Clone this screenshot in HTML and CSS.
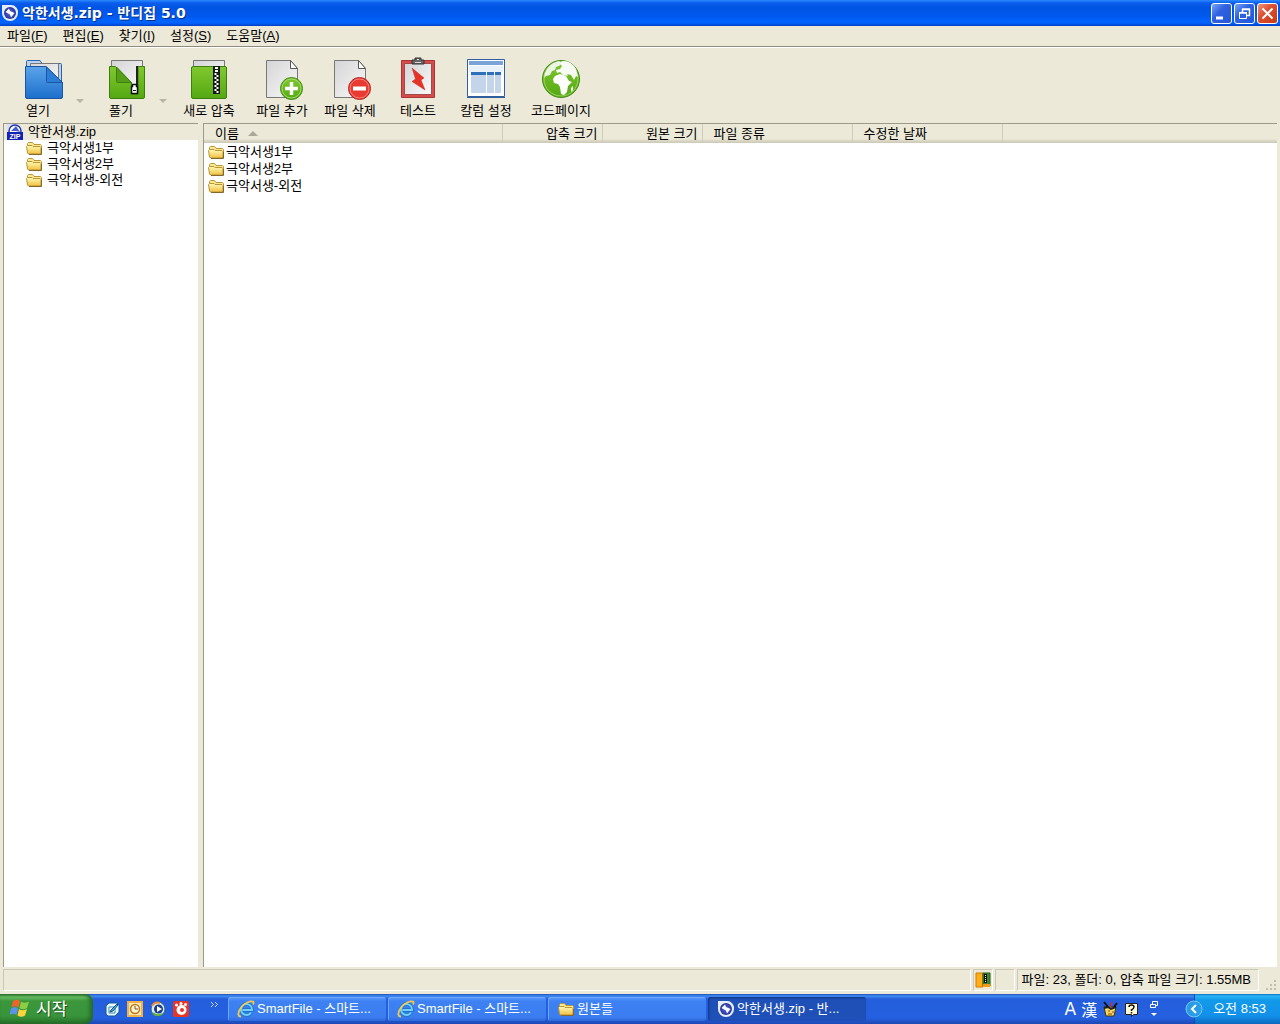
FILE: index.html
```html
<!DOCTYPE html>
<html lang="ko">
<head>
  <meta charset="UTF-8">
  <meta name="viewport" content="width=device-width, initial-scale=1.0">
  <title>악한서생.zip - 반디집 5.0</title>
  <link rel="stylesheet" href="styles.css">
</head>
<body>
  <!-- shared gradients and small icons -->
  <svg class="defs" width="0" height="0" aria-hidden="true">
    <defs>
      <linearGradient id="blue" x1="0" y1="0" x2="0" y2="1"><stop offset="0" stop-color="#5ba4ea"/><stop offset="1" stop-color="#1c6fcb"/></linearGradient>
      <linearGradient id="green" x1="0" y1="0" x2="0" y2="1"><stop offset="0" stop-color="#82c830"/><stop offset="1" stop-color="#54a812"/></linearGradient>
      <linearGradient id="paper" x1="0" y1="0" x2="1" y2="1"><stop offset="0" stop-color="#d4d4d6"/><stop offset="1" stop-color="#fafafa"/></linearGradient>
      <linearGradient id="folder" x1="0" y1="0" x2="0" y2="1"><stop offset="0" stop-color="#fffbb8"/><stop offset="1" stop-color="#f0c040"/></linearGradient>
      <radialGradient id="ball"><stop offset="0" stop-color="#5b6be8"/><stop offset="1" stop-color="#27349c"/></radialGradient>
      <symbol id="i-folder" viewBox="0 0 16 16">
        <path d="M1.500 12V3.500l1-1h4l1.500 2h6.500l1 1v8" fill="#ffe98a" stroke="#b8953a"/>
        <path d="M.5 6.500l1 6.500 1 1h11.500l1-1V7.500l-1-1H7l-1-1H1.500z" fill="url(#folder)" stroke="#b8953a"/>
        <path d="M3 14.500h12.500V8" fill="none" stroke="#86682a"/>
      </symbol>
      <symbol id="i-bandi" viewBox="0 0 16 16">
        <path d="M0 0h9a7 7 0 0 1 7 8 8 8 0 0 1-16 0z" fill="#e9edf9"/>
        <circle cx="8" cy="8" r="6" fill="url(#ball)"/>
        <path d="M3.500 7L7 3.500 8 6l4.500 2L9 12.500 8 9.500z" fill="#fff"/>
      </symbol>
      <symbol id="i-ie" viewBox="0 0 18 18">
        <path d="M14 12.500Q12.500 15 9.500 15A5.500 5.500 0 1 1 15 10H5.500" fill="none" stroke="#1c6fc4" stroke-width="3.500"/>
        <path d="M14 12.500Q12.500 15 9.500 15A5.500 5.500 0 1 1 15 10H5.500" fill="none" stroke="#6fd0fa" stroke-width="2"/>
        <path d="M4 16.500C-2 17 3 4 13 1.500q5-1 3 3" fill="none" stroke="#f2c850" stroke-width="1.800"/>
      </symbol>
    </defs>
  </svg>

  <header class="titlebar">
    <svg class="icon16" aria-hidden="true"><use href="#i-bandi"/></svg>
    <h1>악한서생.zip - 반디집 5.0</h1>
    <div class="window-buttons">
      <button class="win-btn" aria-label="최소화"><svg viewBox="0 0 19 19"><path d="M4 14h7" stroke="#fff" stroke-width="3"/></svg></button>
      <button class="win-btn" aria-label="이전 크기로"><svg viewBox="0 0 19 19"><path d="M7.500 8V5.500h7v6H12M7 5h8M4 9h8" fill="none" stroke="#fff" stroke-width="1.500"/><path d="M4.500 8.500h7v6h-7z" fill="none" stroke="#fff"/></svg></button>
      <button class="win-btn close" aria-label="닫기"><svg viewBox="0 0 19 19"><path d="M4.500 4.500l10 10M14.500 4.500l-10 10" stroke="#fff" stroke-width="2"/></svg></button>
    </div>
  </header>

  <nav class="menubar">
    <button>파일(<u>F</u>)</button>
    <button>편집(<u>E</u>)</button>
    <button>찾기(<u>I</u>)</button>
    <button>설정(<u>S</u>)</button>
    <button>도움말(<u>A</u>)</button>
  </nav>

  <div class="toolbar">
    <button class="tool">
      <svg viewBox="8 57 60 46">
        <path d="M26.500 97V61.500q0-1 1-1H40l2 3h18.500q1 0 1 1V97" fill="#b9d4f2" stroke="#2b62a8"/>
        <path d="M30.500 70v-6.500h28V82" fill="url(#paper)" stroke="#777"/>
        <path d="M25.500 66.500h20.500L62.500 82.500V97q0 1.500-1.500 1.500H27q-1.500 0-1.500-1.500z" fill="url(#blue)" stroke="#1c559f"/>
        <path d="M46.500 67v14.500q0 1 1 1h15z" fill="#2b7dd6" stroke="#1c559f"/>
      </svg>
      열기
    </button>
    <button class="tool-arrow" aria-label="열기 메뉴"></button>
    <button class="tool">
      <svg viewBox="91 57 60 46">
        <path d="M111.500 60.500h31V90h-31z" fill="url(#paper)" stroke="#777"/>
        <path d="M109.500 66.500h6l16 16V94h6.500V66.500h6.500V97q0 1.500-1.500 1.500h-32q-1.500 0-1.500-1.500z" fill="url(#green)" stroke="#3c7f10"/>
        <path d="M116.500 67v14.500q0 1 1 1h14z" fill="#559f18" stroke="#3c7f10"/>
        <path d="M137 66v20" stroke="#222" stroke-width="2"/>
        <path d="M132.500 84.500h4v2h1v7h-6v-7h1z" fill="#fff" stroke="#111" stroke-width="1.500"/>
        <path d="M133 90.500h3" stroke="#111"/>
      </svg>
      풀기
    </button>
    <button class="tool-arrow" aria-label="풀기 메뉴"></button>
    <button class="tool wide">
      <svg viewBox="179 57 60 46">
        <path d="M193.500 60.500h31V80h-31z" fill="url(#paper)" stroke="#777"/>
        <rect x="191.500" y="66.500" width="35" height="32" rx="1.500" fill="url(#green)" stroke="#3c7f10"/>
        <path d="M213 66h7v28h-7z" fill="#181818"/>
        <path d="M215 67h3v5h-3z" fill="#fff"/><path d="M215 69.500h3" stroke="#222"/>
        <path d="M215.500 73v20" stroke="#fff" stroke-width="2" stroke-dasharray="2 2"/>
        <path d="M217.500 75v18" stroke="#fff" stroke-width="2" stroke-dasharray="2 2"/>
      </svg>
      새로 압축
    </button>
    <button class="tool">
      <svg viewBox="252 57 60 46">
        <path d="M266.500 60.500h24l7 8v29h-31z" fill="url(#paper)" stroke="#777"/>
        <path d="M290.500 60.500v8h7z" fill="#fff" stroke="#555"/>
        <circle cx="291.500" cy="88.500" r="11" fill="url(#green)" stroke="#418b14"/>
        <circle cx="291.500" cy="88.500" r="9.500" fill="none" stroke="#a4db71"/>
        <path d="M285 88.500h13M291.500 82v13" stroke="#fff" stroke-width="3.500"/>
      </svg>
      파일 추가
    </button>
    <button class="tool">
      <svg viewBox="320 57 60 46">
        <path d="M334.500 60.500h24l7 8v29h-31z" fill="url(#paper)" stroke="#777"/>
        <path d="M358.500 60.500v8h7z" fill="#fff" stroke="#555"/>
        <circle cx="359.500" cy="88.500" r="11" fill="#e83a31" stroke="#b62822"/>
        <circle cx="359.500" cy="88.500" r="9.500" fill="none" stroke="#fa8279"/>
        <path d="M353 88.500h13" stroke="#fff" stroke-width="4"/>
      </svg>
      파일 삭제
    </button>
    <button class="tool">
      <svg viewBox="388 57 60 46">
        <path d="M401.500 60.500h33v37h-33z" fill="#d94a4a" stroke="#a93535"/>
        <path d="M404.500 63.500h27v31h-27z" fill="url(#paper)" stroke="#a04a4a"/>
        <path d="M412 68l12 10-3 2 4 10-13-8.500 3.500-2.500z" fill="#e83225" stroke="#bc3028" stroke-width=".5"/>
        <path d="M412 60h3v-2h6v2h3v4h-12z" fill="#666" stroke="#333"/>
        <path d="M415 62.500h6M417 59.500h2" stroke="#ddd"/>
      </svg>
      테스트
    </button>
    <button class="tool">
      <svg viewBox="456 57 60 46">
        <path d="M467.500 59.500h37v37h-37z" fill="#fff" stroke="#315f9e"/>
        <path d="M469 61h34v4h-34z" fill="#7ba3d8"/>
        <path d="M469 66h34v6h-34z" fill="#e9f1fb"/>
        <path d="M471 72h15v3h-15zM487 72h7v3h-7zM495 72h6v3h-6z" fill="#2b70b8"/>
        <path d="M471 75h15v18h-15zM487 75h7v18h-7zM495 75h6v18h-6z" fill="#c5d5e9"/>
        <path d="M467 97.500h38" stroke="#315f9e"/>
      </svg>
      칼럼 설정
    </button>
    <button class="tool codepage">
      <svg viewBox="531 57 60 46">
        <circle cx="561" cy="79" r="18.500" fill="url(#green)" stroke="#3f8a15"/>
        <circle cx="561" cy="79" r="17" fill="none" stroke="#9bd462"/>
        <path d="M547 69q5-7 12-8l3 2-3 3-3 1-1 3-3 1-2 4-4 1-2 2q0-5 3-9z" fill="#eef5e4"/>
        <path d="M562 61q9-1 14 8l2 8-2-1-2 4-3-5-4-1 1 2-5-1-3-3-3 1-1-3 4-1 2-3-2-2z" fill="#f8fbf3"/>
        <path d="M555 76l5-2 6 2 3 5 3 1-4 4-1 6-3 3-3-1-1-7-2-3-4-1-1-4z" fill="#fff"/>
        <path d="M571 88l2-2v4l-2 2z" fill="#fff"/>
      </svg>
      코드페이지
    </button>
  </div>

  <main class="panes">
    <ul class="tree">
      <li class="root">
        <svg class="icon16" viewBox="0 0 16 16" aria-hidden="true"><path d="M0 8V0h10l5 5v4z" fill="#d9e2f8"/><circle cx="8" cy="7" r="6" fill="#fff" stroke="#2638b0" stroke-width="1.500"/><path d="M4 7l5-5 4 6-4-1z" fill="#4a5dd0"/><path d="M0 8h16v8H0z" fill="#1422b4"/><text x="8" y="15" class="zip-text">ZIP</text></svg>
        악한서생.zip
      </li>
      <li><svg class="icon16"><use href="#i-folder"/></svg>극악서생1부</li>
      <li><svg class="icon16"><use href="#i-folder"/></svg>극악서생2부</li>
      <li><svg class="icon16"><use href="#i-folder"/></svg>극악서생-외전</li>
    </ul>

    <div class="list">
      <table>
        <colgroup><col class="c-name"><col class="c-size"><col class="c-size"><col class="c-info"><col class="c-info"><col></colgroup>
        <thead>
          <tr><th>이름<span class="sort"></span></th><th class="num">압축 크기</th><th class="num">원본 크기</th><th>파일 종류</th><th>수정한 날짜</th><th></th></tr>
        </thead>
        <tbody>
          <tr><td><span class="file"><svg class="icon16"><use href="#i-folder"/></svg>극악서생1부</span></td><td></td><td></td><td></td><td></td><td></td></tr>
          <tr><td><span class="file"><svg class="icon16"><use href="#i-folder"/></svg>극악서생2부</span></td><td></td><td></td><td></td><td></td><td></td></tr>
          <tr><td><span class="file"><svg class="icon16"><use href="#i-folder"/></svg>극악서생-외전</span></td><td></td><td></td><td></td><td></td><td></td></tr>
        </tbody>
      </table>
    </div>
  </main>

  <div class="statusbar">
    <div class="status-cell grow"></div>
    <div class="status-cell small">
      <svg class="icon16" viewBox="0 0 16 16" aria-hidden="true"><path d="M1 1h7v14H1z" fill="#ffad19" stroke="#d07a00"/><path d="M8 1h7v13H8z" fill="#3d8a32" stroke="#235c1c"/><path d="M10.500 2v9" stroke="#111" stroke-width="3"/><path d="M10.500 3v8" stroke="#eee" stroke-dasharray="1 1"/><path d="M8 12h7v3H8z" fill="#f29c11"/></svg>
    </div>
    <div class="status-cell small"></div>
    <div class="status-cell info">파일: 23, 폴더: 0, 압축 파일 크기: 1.55MB</div>
    <svg class="grip" viewBox="0 0 12 12" aria-hidden="true"><path d="M9 1h2v2H9zM5 5h2v2H5zM9 5h2v2H9zM1 9h2v2H1zM5 9h2v2H5zM9 9h2v2H9z" fill="#c3bfae"/></svg>
  </div>

  <footer class="taskbar">
    <button class="start">
      <svg viewBox="0 0 20 18" aria-hidden="true"><path d="M3 2q4-3 7 0L8.500 8.500q-3-2.500-7 0z" fill="#f0642c"/><path d="M11 2.500q3 2.500 8 0L17 9q-4 2.500-7.500 0z" fill="#8ad044"/><path d="M1 9.500q4-3 7 0L6.500 16q-3-2.500-7 0z" fill="#5b92f0"/><path d="M9 10q3 2.500 8 0l-2 6.500q-4 2.500-7.500 0z" fill="#ffd33a"/></svg>
      시작
    </button>
    <div class="quick">
      <button aria-label="바탕 화면 보기"><svg viewBox="0 0 16 16"><path d="M2 5l3-3h8l2 2v7l-4 4H4l-2-2z" fill="#e8f6ff" stroke="#175897"/><path d="M5 6h6v6H5z" fill="#fff" stroke="#3188ba"/><path d="M7 9l6-6 1 1-5 6-3 1z" fill="#43b5d8" stroke="#164f80"/></svg></button>
      <button aria-label="Outlook"><svg viewBox="0 0 16 16"><path d="M1 1h14v14H1z" fill="#ffe9b8" stroke="#f3b04a" stroke-width="2"/><circle cx="8" cy="8" r="4.500" fill="#fff4d6" stroke="#c07a13" stroke-width="1.500"/><path d="M8 5v3h3" fill="none" stroke="#84540c"/></svg></button>
      <button aria-label="Media Player"><svg viewBox="0 0 16 16"><circle cx="8" cy="8" r="7" fill="#d9edf8" stroke="#265b9b"/><path d="M2 5q3-5 8-3" stroke="#ee8b36" stroke-width="2" fill="none"/><path d="M3 12q4 4 9 1" stroke="#65af3b" stroke-width="2" fill="none"/><circle cx="8.500" cy="8" r="4.500" fill="#1b3c88"/><path d="M7 5l5 3-5 3z" fill="#fff"/></svg></button>
      <button aria-label="곰플레이어"><svg viewBox="0 0 16 16"><rect width="16" height="16" rx="2" fill="#e93525"/><circle cx="8.500" cy="9" r="5" fill="#fff"/><circle cx="3.500" cy="4" r="1.500" fill="#fff"/><circle cx="8" cy="2.500" r="1.500" fill="#fff"/><circle cx="12.500" cy="3.500" r="1.500" fill="#fff"/><circle cx="9" cy="9" r="2" fill="#e93525"/></svg></button>
    </div>
    <button class="more" aria-label="더 보기"><svg viewBox="0 0 9 7"><path d="M1 1l2.500 2.500L1 6M5 1l2.500 2.500L5 6" fill="none" stroke="#c6dcff"/></svg></button>
    <div class="tasks">
      <button><svg class="icon18"><use href="#i-ie"/></svg>SmartFile - 스마트...</button>
      <button><svg class="icon18"><use href="#i-ie"/></svg>SmartFile - 스마트...</button>
      <button><svg class="icon18" viewBox="0 0 18 18"><use href="#i-folder" x="1" y="1" width="16" height="16"/></svg>원본들</button>
      <button class="active"><svg class="icon18" viewBox="0 0 18 18"><use href="#i-bandi" x="1" y="1" width="16" height="16"/></svg>악한서생.zip - 반...</button>
    </div>
    <div class="ime">
      <button class="ime-a">A</button>
      <button class="ime-han">漢</button>
      <button aria-label="IME 패드"><svg viewBox="0 0 16 16"><path d="M2 6h12l-2 9H4z" fill="#f2d85c" stroke="#3d340c"/><path d="M2 7l4-1 3 2 5-2" stroke="#222" fill="none" stroke-width="2"/><path d="M6 6L2 1M12 6l3-4" stroke="#111" stroke-width="2"/><path d="M8 6l2-5" stroke="#a83562" stroke-width="2"/><path d="M6 10h2M10 11h2M6 13h4" stroke="#a33a1d"/></svg></button>
      <button aria-label="도움말"><svg viewBox="0 0 16 16"><path d="M2.500 2.500h12v11h-4l-2 2v-2h-6z" fill="#fffbd6" stroke="#222"/><path d="M6 6q0-2 2.500-2T11 6q0 1.500-2.500 3v1M8.500 11v1.500" fill="none" stroke="#111" stroke-width="1.500"/></svg></button>
      <button class="ime-opt" aria-label="옵션"><svg viewBox="0 0 20 18"><path d="M8.500 4V1.500h5v4H12M6.500 4.500h5v3h-5z" fill="none" stroke="#fff"/><path d="M7 13h6l-3 3z" fill="#fff"/></svg></button>
    </div>
    <div class="tray">
      <button class="tray-toggle" aria-label="숨겨진 아이콘 표시"><svg viewBox="0 0 18 18"><circle cx="9" cy="9" r="8" fill="#279ce9" stroke="#79c9fa"/><path d="M11 5L7 9l4 4" fill="none" stroke="#fff" stroke-width="2"/></svg></button>
      <time>오전 8:53</time>
    </div>
  </footer>
</body>
</html>
```
FILE: styles.css
```css
* {
  box-sizing: border-box;
}
body {
  margin: 0;
  height: 100vh;
  display: flex;
  flex-direction: column;
  overflow: hidden;
  background: #ece9d8;
  color: #000;
  font: 13px/16px "Liberation Sans", "Noto Sans CJK KR", sans-serif;
}
button {
  font: inherit;
  color: inherit;
  background: none;
  border: 0;
  padding: 0;
  white-space: nowrap;
}
svg {
  display: block;
  flex: none;
}
.defs {
  position: absolute;
}
.icon16 {
  width: 16px;
  height: 16px;
}
.icon18 {
  width: 18px;
  height: 18px;
}

/* title bar */
.titlebar {
  display: flex;
  align-items: center;
  height: 26px;
  padding: 0 2px;
  background: linear-gradient(#2a8bff 0, #0a5cec 3px, #0054e3 8px, #0058ee 16px, #0066ff 22px, #0058ee 24px, #003fc0);
}
.titlebar h1 {
  flex: 1;
  margin: 0 0 0 4px;
  color: #fff;
  font: bold 14px/20px "DejaVu Sans", "Noto Sans CJK KR", sans-serif;
  text-shadow: 1px 1px #0a2f80;
}
.window-buttons {
  display: flex;
  gap: 2px;
}
.win-btn {
  width: 21px;
  height: 21px;
  border: 1px solid #fff;
  border-radius: 3px;
  background: linear-gradient(135deg, #7ba4f5, #2f62e0 40%, #2458da);
}
.win-btn.close {
  background: linear-gradient(135deg, #f0987c, #de5030 40%, #c63a14);
}

/* menu */
.menubar {
  display: flex;
  gap: 15px;
  height: 21px;
  padding: 0 7px;
  border-bottom: 1px solid #8f8c7e;
}
.menubar button {
  height: 19px;
}

/* toolbar */
.toolbar {
  display: flex;
  height: 76px;
  padding: 9px 4px 0;
  border-top: 1px solid #fff;
}
.tool {
  display: flex;
  flex-direction: column;
  align-items: center;
  width: 68px;
  height: 62px;
}
.tool.wide {
  width: 78px;
}
.tool.codepage {
  width: 82px;
}
.tool svg {
  width: 60px;
  height: 46px;
}
.tool-arrow {
  width: 15px;
  height: 62px;
  display: flex;
  align-items: center;
  justify-content: center;
  padding-top: 30px;
}
.tool-arrow::before,
.sort {
  content: "";
  border: 4px solid transparent;
  border-top-color: #b8b5a4;
}

/* panes */
.panes {
  flex: 1;
  display: flex;
  gap: 5px;
  min-height: 0;
  padding: 0 3px;
}
.tree,
.list {
  background: #fff;
  border-top: 1px solid #9d9a8b;
  border-left: 1px solid #9d9a8b;
}
.tree {
  flex: none;
  width: 195px;
  margin: 0;
  padding: 0;
  list-style: none;
}
.tree li {
  display: flex;
  align-items: center;
  gap: 5px;
  height: 16px;
  padding-left: 22px;
}
.tree .root {
  padding-left: 3px;
  background: #ece9d8;
}
.zip-text {
  font: bold 7px "Liberation Sans", sans-serif;
  fill: #fff;
  text-anchor: middle;
}
.list {
  flex: 1;
}
.list table {
  width: 100%;
  table-layout: fixed;
  border-collapse: collapse;
}
.c-name {
  width: 298px;
}
.c-size {
  width: 100px;
}
.c-info {
  width: 150px;
}
th {
  height: 19px;
  padding: 0 4px 0 11px;
  font-weight: normal;
  text-align: left;
  background: linear-gradient(#ece9d8 15px, #e0dcca 16px, #cbc7b8);
  border-right: 1px solid #d0ccba;
}
th:last-child {
  border-right: 0;
}
th.num {
  text-align: right;
}
.sort {
  display: inline-block;
  margin: 0 0 2px 9px;
  border-width: 0 5px 5px;
  border-bottom-color: #aca899;
}
td {
  height: 17px;
  padding: 0 4px;
}
.file {
  display: flex;
  gap: 2px;
  align-items: center;
}

/* status bar */
.statusbar {
  display: flex;
  gap: 2px;
  height: 27px;
  padding: 2px 3px 3px;
}
.status-cell {
  display: flex;
  align-items: center;
  justify-content: center;
  border: 1px solid;
  border-color: #cbc8b8 #fff #fff #cbc8b8;
}
.status-cell.grow {
  flex: 1;
}
.status-cell.small {
  width: 20px;
}
.status-cell.info {
  padding: 0 7px 0 4px;
}
.grip {
  width: 12px;
  height: 12px;
  margin-left: 4px;
  align-self: flex-end;
}

/* taskbar */
.taskbar {
  display: flex;
  height: 30px;
  color: #fff;
  background: linear-gradient(#1f4fb8 0, #3f8cf2 2px, #245edc 5px, #2560e0 24px, #1c48b4);
}
.start {
  display: flex;
  align-items: center;
  gap: 6px;
  width: 93px;
  padding: 0 0 3px 10px;
  border-radius: 0 8px 8px 0;
  background: linear-gradient(#2c7a2c 0, #6abf65 3px, #3c973b 7px, #38943a 22px, #256f27);
  box-shadow: inset -3px 0 4px #23662a;
  font: 17px/20px "Noto Sans CJK KR", sans-serif;
  text-shadow: 1px 1px #1e4c1e;
}
.start svg {
  width: 20px;
  height: 18px;
}
.quick {
  display: flex;
  gap: 7px;
  align-items: center;
  margin-left: 11px;
}
.quick svg {
  width: 16px;
  height: 16px;
}
.more {
  width: 39px;
  padding: 0 0 10px 21px;
}
.more svg {
  width: 9px;
  height: 7px;
}
.tasks {
  display: flex;
  flex: 1;
  gap: 2px;
  padding: 3px 0 3px;
}
.tasks button {
  display: flex;
  align-items: center;
  gap: 2px;
  width: 158px;
  padding-left: 9px;
  border-radius: 3px;
  background: linear-gradient(#5f9ffc 0, #3d81f3 4px, #3a7df0 20px, #2f68d8);
  box-shadow: inset 1px 1px #6ba6fc;
}
.tasks button.active {
  background: #1e50b8;
  box-shadow: inset 1px 1px 2px #10357f;
}
.ime {
  display: flex;
  align-items: center;
  gap: 5px;
  margin-right: 30px;
}
.ime svg {
  width: 16px;
  height: 16px;
}
.ime .ime-a {
  font: 17px/20px "DejaVu Sans", sans-serif;
}
.ime .ime-han {
  font: 16px/20px "Noto Sans CJK KR", sans-serif;
}
.ime .ime-opt svg {
  width: 20px;
  height: 18px;
}
.tray {
  display: flex;
  align-items: center;
  gap: 10px;
  padding-right: 14px;
  border-left: 1px solid #0a4ea8;
  background: linear-gradient(#0c72cc 0, #2cb4f6 2px, #129ae9 6px, #1390ea 22px, #0d68c0);
}
.tray-toggle {
  margin-left: -10px;
}
.tray-toggle svg {
  width: 18px;
  height: 18px;
}
```
